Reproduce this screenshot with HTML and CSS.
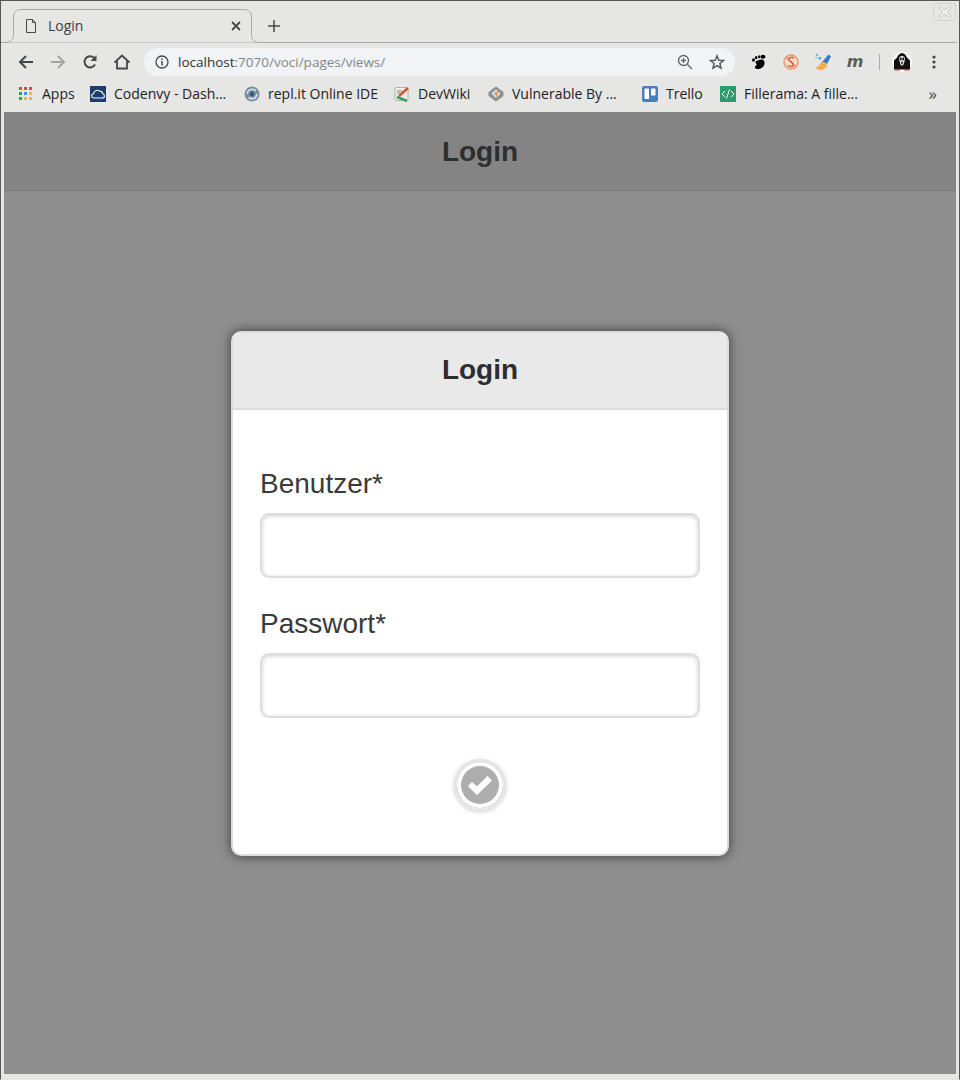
FILE: index.html
```html
<!DOCTYPE html>
<html lang="de">
<head>
    <meta charset="UTF-8">
    <meta name="viewport" content="width=device-width, initial-scale=1.0">
    <title>Login</title>
    <link rel="stylesheet" href="styles.css">
</head>
<body>
    <div class="window">
        <!-- Tab strip -->
        <div class="tabstrip">
            <div class="tab">
                <svg class="tab-outline" width="256" height="34" viewBox="0 0 256 34">
                    <path d="M0 33.5H1C6 33.5 9.500 31 9.500 26V8C9.500 3.500 12 .5 17 .5H240C245 .5 247.500 3.500 247.500 8V26C247.500 31 251 33.500 255 33.500H256" fill="#e6e6e4" stroke="#a8a8a5"/>
                </svg>
                <svg class="tab-icon" width="16" height="16" viewBox="0 0 16 16">
                    <path d="M3.500 1.500H9.500L12.500 4.500V14.500H3.500Z M9.500 1.500V4.500H12.500" fill="none" stroke="#45484b"/>
                </svg>
                <span class="tab-title">Login</span>
                <svg class="tab-close" width="10" height="10" viewBox="0 0 10 10">
                    <path d="M1 1L9 9M9 1L1 9" stroke="#45484b" stroke-width="1.800"/>
                </svg>
            </div>
            <svg class="new-tab" width="12" height="12" viewBox="0 0 12 12">
                <path d="M6 0V12M0 6H12" stroke="#45484b" stroke-width="1.500"/>
            </svg>
            <div class="win-close">
                <svg width="14" height="12" viewBox="0 0 14 12">
                    <path d="M1 2L2.500 .5L7 4L11.500 .5L13 2L9.500 6L13 10L11.500 11.500L7 8L2.500 11.500L1 10L4.500 6Z" fill="#f2f2f0" stroke="#c4c4be"/>
                </svg>
            </div>
        </div>

        <!-- Toolbar -->
        <div class="toolbar">
            <div class="nav-buttons">
                <svg class="nav-icon" width="16" height="16" viewBox="0 0 16 16">
                    <path d="M15 8H2.500M8 2L2 8L8 14" fill="none" stroke="#45484b" stroke-width="2"/>
                </svg>
                <svg class="nav-icon" width="16" height="16" viewBox="0 0 16 16">
                    <path d="M1 8H13.500M8 2L14 8L8 14" fill="none" stroke="#a3a3a3" stroke-width="2"/>
                </svg>
                <svg class="nav-icon" width="16" height="16" viewBox="0 0 16 16">
                    <path d="M13 10.500A5.600 5.600 0 1 1 12.200 4" fill="none" stroke="#45484b" stroke-width="2"/>
                    <path d="M14.500 1V7H8.500Z" fill="#45484b"/>
                </svg>
                <svg class="nav-icon" width="16" height="16" viewBox="0 0 16 16">
                    <path d="M.5 8.500L8 1.500L15.500 8.500M3 7V14.500H13V7" fill="none" stroke="#45484b" stroke-width="1.800"/>
                </svg>
            </div>
            <div class="omnibox">
                <svg class="info-icon" width="14" height="14" viewBox="0 0 14 14">
                    <circle cx="7" cy="7" r="6" fill="none" stroke="#45484b" stroke-width="1.300"/>
                    <path d="M7 6V10.500M7 3.500V5" stroke="#45484b" stroke-width="1.500"/>
                </svg>
                <span class="url">localhost<span class="url-rest">:7070/voci/pages/views/</span></span>
                <svg class="zoom-icon" width="16" height="16" viewBox="0 0 16 16">
                    <circle cx="6.500" cy="6.500" r="5" fill="none" stroke="#5f6368" stroke-width="1.300"/>
                    <path d="M10.500 10.500L15 15M4 6.500H9M6.500 4V9" stroke="#5f6368" stroke-width="1.300"/>
                </svg>
                <svg class="star-icon" width="16" height="16" viewBox="0 0 16 16">
                    <path d="M8 1.800L9.800 6.200L14.500 6.500L10.900 9.500L12 14.100L8 11.600L4 14.100L5.100 9.500L1.500 6.500L6.200 6.200Z" fill="none" stroke="#565a5e" stroke-width="1.500"/>
                </svg>
            </div>
            <div class="extensions">
                <svg class="ext" width="16" height="16" viewBox="0 0 16 16">
                    <path d="M7 6.500C11 4 14 6 13.500 9.500C13 13.500 9.500 15.500 6 15C3.500 14.500 3.500 12.500 5 11.500C6.500 10.500 5 9.500 4.500 8.500C4.200 7.500 5.500 7 7 6.500Z" fill="#000"/>
                    <ellipse cx="2.500" cy="6" rx="1.500" ry="1.800" fill="#000"/>
                    <ellipse cx="5.200" cy="3.600" rx="1.300" ry="1.700" fill="#000"/>
                    <ellipse cx="8.300" cy="2.800" rx="1.200" ry="1.500" fill="#000"/>
                    <ellipse cx="12" cy="2.800" rx="2.400" ry="2" fill="#000"/>
                </svg>
                <svg class="ext" width="16" height="16" viewBox="0 0 16 16">
                    <circle cx="8" cy="8" r="7" fill="#f7dcc8" stroke="#e9967a" stroke-width="1.500"/>
                    <path d="M3 3L13 13" stroke="#e9967a" stroke-width="1.500"/>
                    <path d="M11 4C8 2.500 5 4 6 6C7 8 11 8.500 10.500 11C10 13 7 13 5 11.500" fill="none" stroke="#dc5a3a" stroke-width="1.500"/>
                </svg>
                <svg class="ext" width="18" height="18" viewBox="0 0 18 18">
                    <path d="M8.500 8.500L14.500 1.500L17 3.500L13 11Z" fill="#3f76c9"/>
                    <path d="M7.500 8L13.500 12C12.500 14.500 9.500 17 7 17C5 17 2.500 16 1 14.500C4 14.500 6 12 7.500 8Z" fill="#f0ad4e"/>
                    <circle cx="3" cy="1.800" r="1.100" fill="#5aa7dd"/>
                    <rect x="4.500" y="4" width="2.500" height="2.500" fill="#5aa7dd"/>
                    <circle cx="2" cy="5" r=".8" fill="#5aa7dd"/>
                </svg>
                <span class="ext-m">m</span>
                <span class="ext-sep"></span>
                <svg class="ext" width="20" height="20" viewBox="0 0 20 20">
                    <circle cx="10" cy="10" r="10" fill="#fff"/>
                    <path d="M10 1C12.500 1 14 3.500 15 5.500L18 8.500V17.500H2V8.500L5 5.500C6 3.500 7.500 1 10 1Z" fill="#111"/>
                    <path d="M7.500 5C8.500 3.500 11.500 3.500 12.500 5C13.500 7.500 12 11.500 11 13.500H9C8 11.500 6.500 7.500 7.500 5Z" fill="#e0e0e0"/>
                    <ellipse cx="8.800" cy="7" rx=".9" ry="1.400" fill="#111"/>
                    <ellipse cx="11.200" cy="7" rx=".9" ry="1.400" fill="#111"/>
                    <ellipse cx="10" cy="10.700" rx=".7" ry="1.500" fill="#111"/>
                    <path d="M3 18H8M12 18H17" stroke="#b3392b"/>
                </svg>
                <svg class="ext-menu" width="4" height="14" viewBox="0 0 4 14">
                    <circle cx="2" cy="2" r="1.600" fill="#45484b"/>
                    <circle cx="2" cy="7" r="1.600" fill="#45484b"/>
                    <circle cx="2" cy="12" r="1.600" fill="#45484b"/>
                </svg>
            </div>
        </div>

        <!-- Bookmarks -->
        <div class="bookmarks">
            <a class="bookmark bm-apps">
                <svg width="16" height="16" viewBox="0 0 16 16">
                    <rect x="1" y="1" width="3" height="3" fill="#d8493c"/><rect x="6" y="1" width="3" height="3" fill="#d8493c"/><rect x="11" y="1" width="3" height="3" fill="#d8493c"/>
                    <rect x="1" y="6" width="3" height="3" fill="#2f9e5f"/><rect x="6" y="6" width="3" height="3" fill="#4a8fe0"/><rect x="11" y="6" width="3" height="3" fill="#eeb33c"/>
                    <rect x="1" y="11" width="3" height="3" fill="#2f9e5f"/><rect x="6" y="11" width="3" height="3" fill="#eeb33c"/><rect x="11" y="11" width="3" height="3" fill="#eeb33c"/>
                </svg>
                <span>Apps</span>
            </a>
            <a class="bookmark bm-codenvy">
                <svg width="16" height="16" viewBox="0 0 16 16">
                    <rect width="16" height="16" fill="#1c3d6e"/>
                    <path d="M3.500 12C1 11.500 1 8 3.500 7.800C4 4.500 8 3 10 5.500C11.500 5 12.500 6 12.500 7.500C15 8 15 12 12.500 12Z" fill="none" stroke="#fff" stroke-width="1.100"/>
                </svg>
                <span>Codenvy - Dash...</span>
            </a>
            <a class="bookmark bm-repl">
                <svg width="16" height="16" viewBox="0 0 16 16">
                    <circle cx="8" cy="8" r="7.500" fill="#7a8fa3"/>
                    <circle cx="8" cy="8" r="4.800" fill="none" stroke="#e4e9ed" stroke-width="1.600" stroke-dasharray="11 4"/>
                    <circle cx="8" cy="8" r="2.200" fill="#35566f"/>
                </svg>
                <span>repl.it Online IDE</span>
            </a>
            <a class="bookmark bm-devwiki">
                <svg width="16" height="16" viewBox="0 0 16 16">
                    <rect x="1" y="1.500" width="13" height="13" rx="1" fill="#efefe8" stroke="#b5b5ad"/>
                    <path d="M5 10L14 2" stroke="#d8502f" stroke-width="2.500"/>
                    <path d="M3 11L13 15" stroke="#2f9e5f" stroke-width="2.500"/>
                    <path d="M3 5H8M3 7H6" stroke="#8a8a82"/>
                </svg>
                <span>DevWiki</span>
            </a>
            <a class="bookmark bm-vuln">
                <svg width="16" height="16" viewBox="0 0 16 16">
                    <path d="M8 .5L15.500 6V10L8 15.500L.5 10V6Z" fill="#8f8f8c"/>
                    <path d="M8 3.500L12.500 7.500L8 12L3.500 7.500Z" fill="#e8e8e6"/>
                    <path d="M9 4.500L10.500 6L8.500 11L7.500 10Z" fill="#e08a3c"/>
                    <path d="M7 6L8 7L7 9L6 8Z" fill="#4a8fe0"/>
                </svg>
                <span>Vulnerable By ...</span>
            </a>
            <a class="bookmark bm-trello">
                <svg width="16" height="16" viewBox="0 0 16 16">
                    <rect width="16" height="16" rx="2" fill="#4a7cc0"/>
                    <rect x="2.500" y="2.500" width="4.500" height="10.500" rx=".5" fill="#fff"/>
                    <rect x="9" y="2.500" width="4.500" height="7" rx=".5" fill="#fff"/>
                </svg>
                <span>Trello</span>
            </a>
            <a class="bookmark bm-fillerama">
                <svg width="16" height="16" viewBox="0 0 16 16">
                    <rect width="16" height="16" fill="#2d9c6c"/>
                    <path d="M5 5L2 8L5 11M11 5L14 8L11 11M9.500 3.500L6.500 12.500" fill="none" stroke="#fff"/>
                </svg>
                <span>Fillerama: A fille...</span>
            </a>
            <span class="more">»</span>
        </div>

        <!-- Page -->
        <div class="page">
            <header class="page-header">
                <h1>Login</h1>
            </header>
            <main class="page-main">
                <div class="popup">
                    <div class="popup-header">
                        <h2>Login</h2>
                    </div>
                    <form class="popup-form">
                        <label for="benutzer">Benutzer*</label>
                        <input type="text" id="benutzer">
                        <label for="passwort">Passwort*</label>
                        <input type="password" id="passwort">
                        <button type="button" class="submit" aria-label="Login">
                            <svg width="24" height="22" viewBox="0 0 24 22">
                                <path d="M0 12L4 8L9 12.500L19.500 2L24 6.500L9 21Z" fill="#fff"/>
                            </svg>
                        </button>
                    </form>
                </div>
            </main>
        </div>
    </div>
</body>
</html>
```

FILE: styles.css
```css
/* General */
html, body {
    margin: 0;
    padding: 0;
}

body {
    font-family: "Liberation Sans", Arial, sans-serif;
}

.window {
    width: 960px;
    height: 1080px;
    box-sizing: border-box;
    background: #e6e6e4;
    border: 1px solid #55585a;
    border-bottom-color: #e6e6e4;
    display: flex;
    flex-direction: column;
    overflow: hidden;
}

/* Tab strip */
.tabstrip {
    height: 42px;
    box-sizing: border-box;
    border-bottom: 1px solid #a8a8a5;
    margin-right: 2px;
    display: flex;
    align-items: flex-start;
}

.tab {
    position: relative;
    width: 256px;
    height: 34px;
    margin-top: 8px;
    margin-left: 3px;
    display: flex;
    align-items: center;
    font: 14px "Open Sans", sans-serif;
    color: #3c4043;
}

.tab-outline {
    position: absolute;
    left: 0;
    top: 0;
}

.tab-icon, .tab-title, .tab-close {
    position: relative;
}

.tab-icon {
    margin-left: 19px;
}

.tab-title {
    margin-left: 9px;
    margin-bottom: 2px;
    flex: 1;
}

.tab-close {
    margin-right: 19px;
}

.new-tab {
    margin-top: 19px;
    margin-left: 8px;
}

.win-close {
    margin-left: auto;
    margin-top: 2px;
    margin-right: 1px;
    width: 23px;
    height: 18px;
    box-sizing: border-box;
    border: 1px solid #d4d4ce;
    border-radius: 2px;
    display: flex;
    align-items: center;
    justify-content: center;
}

/* Toolbar */
.toolbar {
    height: 38px;
    display: flex;
    align-items: center;
}

.nav-buttons {
    display: flex;
    gap: 16px;
    margin-left: 17px;
}

.omnibox {
    width: 591px;
    height: 28px;
    margin-left: 14px;
    background: #f1f3f4;
    border-radius: 14px;
    display: flex;
    align-items: center;
    font: 13.5px "Open Sans", sans-serif;
}

.info-icon {
    margin-left: 11px;
}

.url {
    margin-left: 9px;
    flex: 1;
    color: #2f3236;
}

.url-rest {
    color: #80868b;
}

.star-icon {
    margin-left: 16px;
    margin-right: 10px;
}

.extensions {
    display: flex;
    align-items: center;
    margin-left: 16px;
}

.ext {
    flex: none;
}

.extensions > .ext:nth-child(2) { margin-left: 16px; }
.extensions > .ext:nth-child(3) { margin-left: 15px; }
.extensions > .ext:nth-child(6) { margin-left: 12px; }

.ext-m {
    margin-left: 14px;
    width: 18px;
    text-align: center;
    font: italic bold 16px "DejaVu Sans", sans-serif;
    color: #5c5c5c;
    line-height: 16px;
}

.ext-sep {
    width: 1px;
    height: 16px;
    background: #aaaaa6;
    margin-left: 15px;
}

.ext-menu {
    margin-left: 20px;
}

/* Bookmarks */
.bookmarks {
    height: 31px;
    box-sizing: border-box;
    padding: 0 0 6px 17px;
    display: flex;
    align-items: center;
    font: 14px "Open Sans", sans-serif;
    color: #222;
}

.bookmark {
    display: flex;
    align-items: center;
    gap: 8px;
    white-space: nowrap;
}

.bm-apps { width: 72px; }
.bm-codenvy { width: 154px; }
.bm-repl { width: 150px; }
.bm-devwiki { width: 94px; }
.bm-vuln { width: 154px; }
.bm-trello { width: 78px; }

.more {
    margin-left: auto;
    margin-right: 22px;
    font-size: 17px;
    line-height: 16px;
    color: #45484b;
}

/* Page */
.page {
    flex: 1;
    margin: 0 3px 5px;
    background: #8e8e8e;
    display: flex;
    flex-direction: column;
}

.page-header {
    height: 79px;
    box-sizing: border-box;
    padding-top: 2px;
    background: #848484;
    border-bottom: 1px solid #7a7a7a;
    display: flex;
    align-items: center;
    justify-content: center;
}

h1, h2 {
    margin: 0;
    font-size: 28px;
    font-weight: bold;
    color: #2e2e2e;
}

.page-main {
    flex: 1;
    padding-top: 140px;
    display: flex;
    flex-direction: column;
    align-items: center;
}

/* Popup */
.popup {
    width: 498px;
    height: 525px;
    box-sizing: border-box;
    background: #fff;
    border: 2px solid #dcdcdc;
    border-radius: 10px;
    box-shadow: 0 0 12px rgba(0, 0, 0, 0.6);
    overflow: hidden;
}

.popup-header {
    height: 77px;
    box-sizing: border-box;
    padding-bottom: 2px;
    background: #e9e9e9;
    border-bottom: 2px solid #dcdcdc;
    display: flex;
    align-items: center;
    justify-content: center;
}

.popup-form {
    padding: 57px 27px 0;
    display: flex;
    flex-direction: column;
}

label {
    font-size: 28px;
    line-height: 34px;
    color: #3a3a3a;
    margin-bottom: 12px;
}

input {
    height: 65px;
    box-sizing: border-box;
    border: 2px solid #dddddd;
    border-radius: 9px;
    box-shadow: inset 0 1px 4px rgba(0, 0, 0, 0.2);
    margin-bottom: 29px;
    outline: none;
}

.submit {
    align-self: center;
    width: 52px;
    height: 52px;
    margin-top: 12px;
    padding: 0;
    box-sizing: border-box;
    border: 3px solid #e6e6e6;
    border-radius: 50%;
    background: #adadad;
    box-shadow: inset 0 0 0 4px #fff, 0 1px 4px rgba(0, 0, 0, 0.2);
    display: flex;
    align-items: center;
    justify-content: center;
}
```
